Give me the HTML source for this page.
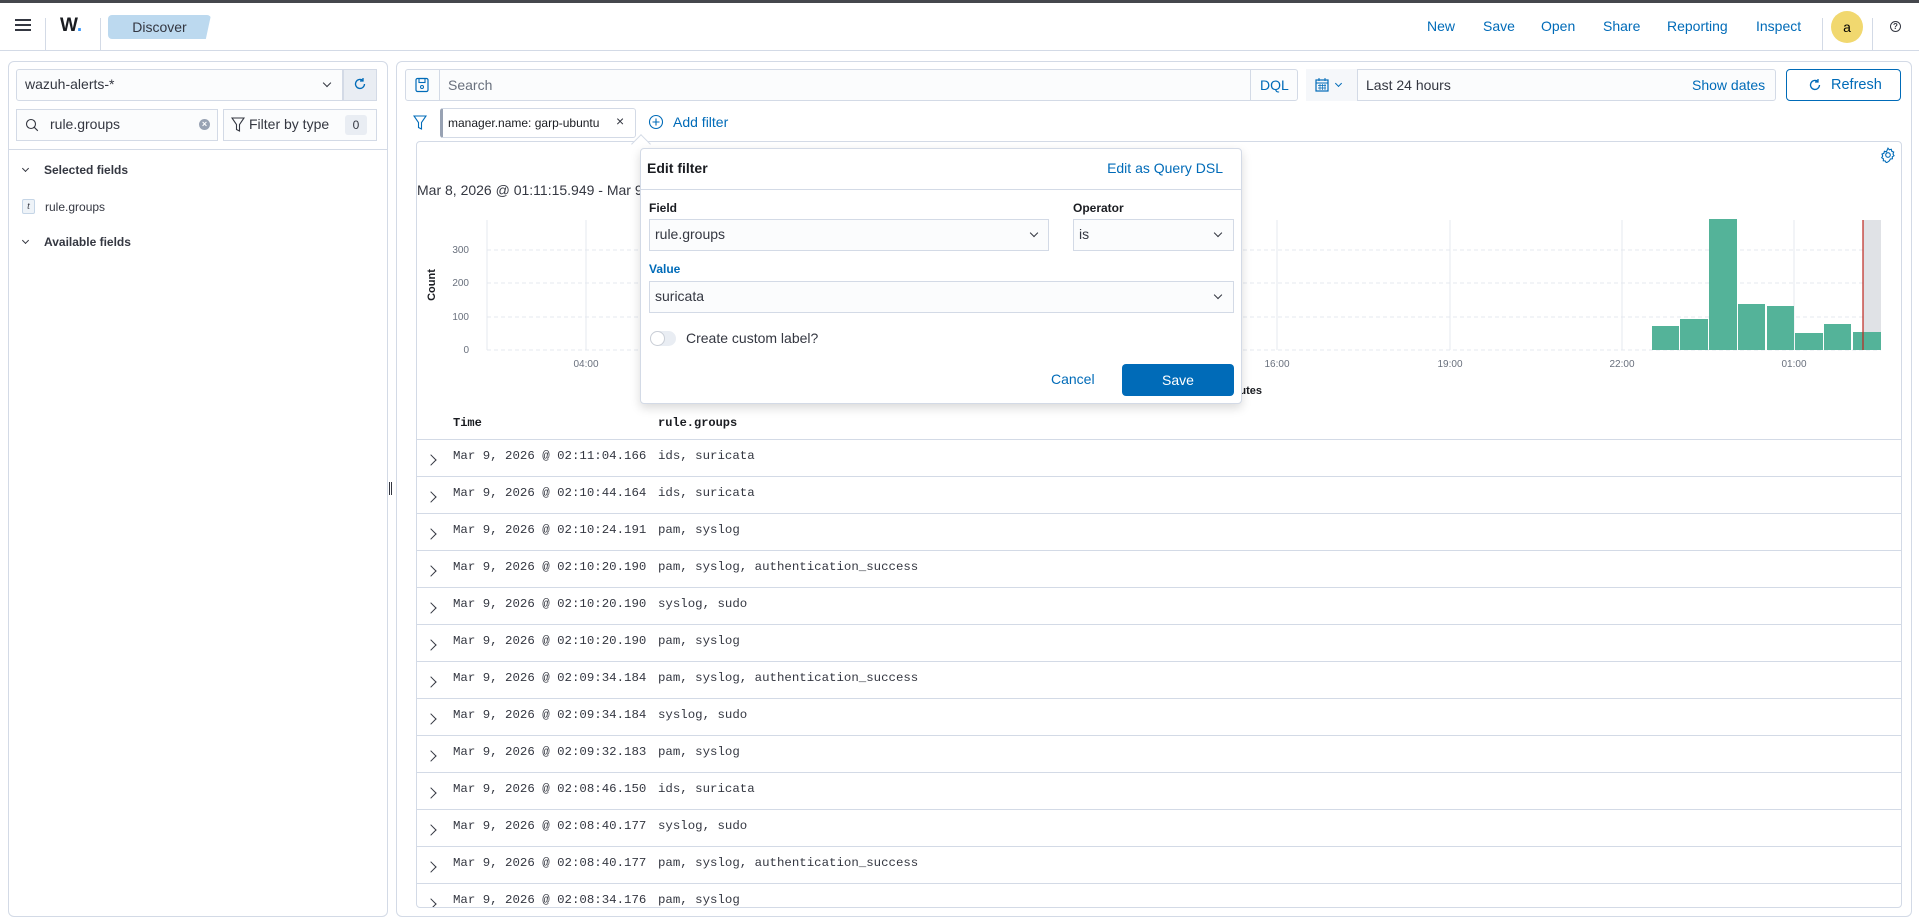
<!DOCTYPE html>
<html><head><meta charset="utf-8">
<style>
*{box-sizing:border-box;margin:0;padding:0}
body{width:1919px;height:920px;overflow:hidden;background:#fff;font-family:"Liberation Sans",sans-serif;color:#343741;font-size:14px;position:relative}
.a{position:absolute}
.blue{color:#006bb8}
.box{position:absolute;border:1px solid #d3dae6;background:#fbfcfd}
.mono{font-family:"Liberation Mono",monospace}
.lbl{font-size:12px;font-weight:bold;color:#1a1c21}
.chev{position:absolute;width:7px;height:7px;border-right:1.3px solid #343741;border-bottom:1.3px solid #343741;transform:rotate(45deg)}
.rowchev{position:absolute;width:8px;height:8px;border-right:1.3px solid #343741;border-top:1.3px solid #343741;transform:rotate(45deg)}
</style></head><body>
<div class="a" style="left:0;top:0;width:1919px;height:3px;background:#45474d"></div>
<div class="a" style="left:0;top:3px;width:1919px;height:48px;border-bottom:1px solid #d3dae6;background:#fff"></div>
<div class="a" style="left:15px;top:19px;width:16px;height:2px;background:#343741;box-shadow:0 5px 0 #343741,0 10px 0 #343741"></div>
<div class="a" style="left:45px;top:18px;width:1px;height:33px;background:#d3dae6"></div>
<div class="a" style="left:60px;top:15px;font-size:19px;font-weight:bold;color:#1a1c21">W<span style="color:#3595f9">.</span></div>
<div class="a" style="left:100px;top:18px;width:1px;height:33px;background:#d3dae6"></div>
<div class="a" style="left:108px;top:15px;width:103px;height:24px;background:#bcd9ef;border-radius:4px;clip-path:polygon(0 0,100% 0,95% 100%,0 100%);text-align:center;line-height:24px;font-size:14px;color:#343741">Discover</div>
<div class="a blue" style="left:1427px;top:18px">New</div>
<div class="a blue" style="left:1483px;top:18px">Save</div>
<div class="a blue" style="left:1541px;top:18px">Open</div>
<div class="a blue" style="left:1603px;top:18px">Share</div>
<div class="a blue" style="left:1667px;top:18px">Reporting</div>
<div class="a blue" style="left:1756px;top:18px">Inspect</div>
<div class="a" style="left:1822px;top:18px;width:1px;height:33px;background:#d3dae6"></div>
<div class="a" style="left:1831px;top:11px;width:32px;height:32px;border-radius:50%;background:#f1d86f;text-align:center;line-height:32px;font-size:14px;color:#000">a</div>
<div class="a" style="left:1872px;top:18px;width:1px;height:33px;background:#d3dae6"></div>
<div class="a" style="left:1890px;top:21px;width:11px;height:11px;border:1.2px solid #343741;border-radius:50%;font-size:8px;line-height:9px;text-align:center;font-weight:bold">?</div>

<div class="a" style="left:8px;top:61px;width:380px;height:856px;border:1px solid #d3dae6;border-radius:6px;background:#fff"></div>
<div class="box" style="left:16px;top:69px;width:327px;height:32px;border-radius:3px 0 0 3px"></div>
<div class="a" style="left:25px;top:76px;font-size:14px">wazuh-alerts-*</div>
<div class="chev" style="left:324px;top:80px;width:6px;height:6px"></div>
<div class="a" style="left:343px;top:69px;width:34px;height:32px;background:#e9edf3;border:1px solid #d3dae6"></div>
<svg class="a" style="left:353px;top:77px" width="14" height="14" viewBox="0 0 14 14"><path d="M11.5 7a4.5 4.5 0 1 1-1.6-3.5" fill="none" stroke="#006bb8" stroke-width="1.3"/><path d="M10 1v3h-3" fill="none" stroke="#006bb8" stroke-width="1.3"/></svg>
<div class="box" style="left:16px;top:109px;width:202px;height:32px"></div>
<svg class="a" style="left:25px;top:118px" width="14" height="14"><circle cx="6" cy="6" r="4.5" fill="none" stroke="#343741" stroke-width="1.1"/><path d="M9.3 9.3l3.5 3.5" stroke="#343741" stroke-width="1.1"/></svg>
<div class="a" style="left:50px;top:116px">rule.groups</div>
<div class="a" style="left:199px;top:119px;width:11px;height:11px;border-radius:50%;background:#98a2b3;color:#fff;font-size:9px;line-height:11px;text-align:center;font-weight:bold">×</div>
<div class="box" style="left:223px;top:109px;width:154px;height:32px"></div>
<svg class="a" style="left:231px;top:117px" width="14" height="16"><path d="M1 1h12L8.5 7.5V14l-3-1.5V7.5z" fill="none" stroke="#343741" stroke-width="1.1"/></svg>
<div class="a" style="left:249px;top:116px">Filter by type</div>
<div class="a" style="left:345px;top:115px;width:22px;height:20px;background:#e9edf3;border-radius:3px;text-align:center;line-height:20px;font-size:12px">0</div>
<div class="a" style="left:9px;top:149px;width:378px;height:1px;background:#d3dae6"></div>
<div class="chev" style="left:23px;top:166px;width:5px;height:5px;border-width:1px"></div>
<div class="a lbl" style="left:44px;top:163px;color:#343741">Selected fields</div>
<div class="a" style="left:22px;top:199px;width:13px;height:15px;border:1px solid #c5d5e6;background:#eef3f8;border-radius:2px;font-size:10px;text-align:center;line-height:13px;font-style:italic;font-family:'Liberation Serif',serif">t</div>
<div class="a" style="left:45px;top:200px;font-size:12px">rule.groups</div>
<div class="chev" style="left:23px;top:238px;width:5px;height:5px;border-width:1px"></div>
<div class="a lbl" style="left:44px;top:235px;color:#343741">Available fields</div>
<div class="a" style="left:389px;top:482px;width:1px;height:13px;background:#343741;box-shadow:2px 0 0 #343741"></div>

<div class="a" style="left:396px;top:61px;width:1516px;height:856px;border:1px solid #d3dae6;border-radius:6px;background:#fff"></div>
<div class="box" style="left:405px;top:69px;width:893px;height:32px;border-radius:3px"></div>
<div class="a" style="left:405px;top:69px;width:35px;height:32px;border-right:1px solid #d3dae6"></div>
<svg class="a" style="left:414px;top:77px" width="16" height="16"><rect x="2" y="1.5" width="12" height="13" rx="1.5" fill="none" stroke="#006bb8" stroke-width="1.2"/><rect x="5" y="1.5" width="6" height="4" fill="none" stroke="#006bb8" stroke-width="1.1"/><circle cx="8" cy="10" r="1.5" fill="none" stroke="#006bb8"/></svg>
<div class="a" style="left:448px;top:77px;color:#69707d">Search</div>
<div class="a" style="left:1250px;top:69px;width:1px;height:32px;background:#d3dae6"></div>
<div class="a blue" style="left:1260px;top:77px">DQL</div>
<div class="box" style="left:1306px;top:69px;width:470px;height:32px;border-radius:3px"></div>
<div class="a" style="left:1306px;top:69px;width:52px;height:32px;border-right:1px solid #d3dae6;background:#f5f7fa"></div>
<svg class="a" style="left:1315px;top:78px" width="14" height="14"><rect x="1" y="2" width="12" height="11" fill="none" stroke="#006bb8" stroke-width="1.2"/><path d="M1 5h12M4 0v3M10 0v3" stroke="#006bb8"/><path d="M3 7.5h8M3 10h8M5 6v6M7.5 6v6M10 6v6" stroke="#006bb8" stroke-width=".7"/></svg>
<div class="chev" style="left:1336px;top:81px;width:5px;height:5px;border-color:#006bb8;border-width:1px"></div>
<div class="a" style="left:1366px;top:77px">Last 24 hours</div>
<div class="a blue" style="left:1692px;top:77px">Show dates</div>
<div class="a" style="left:1786px;top:69px;width:115px;height:32px;border:1px solid #006bb8;border-radius:4px"></div>
<svg class="a" style="left:1808px;top:78px" width="14" height="14"><path d="M11.5 7a4.5 4.5 0 1 1-1.6-3.5" fill="none" stroke="#006bb8" stroke-width="1.3"/><path d="M10 1v3h-3" fill="none" stroke="#006bb8" stroke-width="1.3"/></svg>
<div class="a blue" style="left:1831px;top:77px;font-size:14.5px">Refresh</div>

<svg class="a" style="left:413px;top:115px" width="14" height="16"><path d="M1 1h12L8.5 7.5V14l-3-1.5V7.5z" fill="none" stroke="#006bb8" stroke-width="1.1"/></svg>
<div class="a" style="left:440px;top:108px;width:196px;height:30px;border:1px solid #d3dae6;border-left:3px solid #98a2b3;border-radius:3px;background:#fff"></div>
<div class="a" style="left:448px;top:116px;font-size:12px;color:#1a1c21">manager.name: garp-ubuntu</div>
<div class="a" style="left:616px;top:113px;font-size:14px;color:#343741">×</div>
<svg class="a" style="left:648px;top:114px" width="16" height="16"><circle cx="8" cy="8" r="6.5" fill="none" stroke="#006bb8" stroke-width="1.1"/><path d="M8 4.5v7M4.5 8h7" stroke="#006bb8" stroke-width="1.1"/></svg>
<div class="a blue" style="left:673px;top:114px">Add filter</div>

<div class="a" style="left:416px;top:141px;width:1486px;height:767px;border:1px solid #d3dae6;border-radius:4px;background:#fff;overflow:hidden">
  <div class="a" style="left:0;top:40px;font-size:14px">Mar 8, 2026 @ 01:11:15.949 - Mar 9, 2026 @ 02:11:15.949</div>
</div>
<svg class="a" style="left:1880px;top:147px" width="16" height="16" viewBox="0 0 16 16"><circle cx="8" cy="8" r="2.3" fill="none" stroke="#006bb8" stroke-width="1.1"/><path d="M8 1.2l1.3 1.6 2-.5.5 2 1.9.8-.7 1.9 1 1.7-1.7 1.1.1 2-2 .2-1 1.8L8 14.8l-1.7 1-1-1.8-2-.2.1-2L1.7 10.7l1-1.7-.7-1.9 1.9-.8.5-2 2 .5z" fill="none" stroke="#006bb8" stroke-width="1.1"/></svg>
<svg class="a" style="left:417px;top:210px" width="1484" height="200" font-family="Liberation Sans" font-size="10" fill="#69707d">
  <g stroke="#e4e8ef" stroke-width="1">
    <line x1="169" y1="10" x2="169" y2="140"/><line x1="342" y1="10" x2="342" y2="140"/><line x1="515" y1="10" x2="515" y2="140"/><line x1="687" y1="10" x2="687" y2="140"/><line x1="860" y1="10" x2="860" y2="140"/><line x1="1033" y1="10" x2="1033" y2="140"/><line x1="1205" y1="10" x2="1205" y2="140"/><line x1="1377" y1="10" x2="1377" y2="140"/>
  </g>
  <g stroke="#e4e8ef" stroke-dasharray="4 3">
    <line x1="70" y1="40" x2="1464" y2="40"/><line x1="70" y1="73" x2="1464" y2="73"/><line x1="70" y1="107" x2="1464" y2="107"/><line x1="70" y1="140" x2="1464" y2="140"/>
  </g>
  <line x1="70" y1="10" x2="70" y2="140" stroke="#e4e8ef"/>
  <text x="52" y="43" text-anchor="end">300</text><text x="52" y="76" text-anchor="end">200</text><text x="52" y="110" text-anchor="end">100</text><text x="52" y="143" text-anchor="end">0</text>
  <text x="18" y="75" transform="rotate(-90 18 75)" text-anchor="middle" font-size="11" font-weight="bold" fill="#1a1c21">Count</text>
  <text x="169" y="157" text-anchor="middle">04:00</text><text x="342" y="157" text-anchor="middle">07:00</text><text x="515" y="157" text-anchor="middle">10:00</text><text x="687" y="157" text-anchor="middle">13:00</text><text x="860" y="157" text-anchor="middle">16:00</text><text x="1033" y="157" text-anchor="middle">19:00</text><text x="1205" y="157" text-anchor="middle">22:00</text><text x="1377" y="157" text-anchor="middle">01:00</text>
  <text x="845" y="184" text-anchor="end" font-size="11" font-weight="bold" fill="#1a1c21">@timestamp per 30 minutes</text>
  <rect x="1446" y="10" width="18" height="130" fill="#e0e2e6"/>
  <g fill="#54b399">
    <rect x="1235" y="116" width="27" height="24"/><rect x="1263" y="109" width="28" height="31"/><rect x="1292" y="9" width="28" height="131"/><rect x="1321" y="94" width="27" height="46"/><rect x="1350" y="96" width="27" height="44"/><rect x="1378" y="123" width="28" height="17"/><rect x="1407" y="114" width="27" height="26"/><rect x="1436" y="122" width="28" height="18"/>
  </g>
  <line x1="1446" y1="10" x2="1446" y2="140" stroke="#bd271e" stroke-width="1.2"/>
</svg>

<div class="a mono" style="left:453px;top:416px;font-size:12px;font-weight:bold;color:#1a1c21">Time</div>
<div class="a mono" style="left:658px;top:416px;font-size:12px;font-weight:bold;color:#1a1c21">rule.groups</div>
<div class="a" id="rows" style="left:417px;top:439px;width:1484px;height:468px;overflow:hidden">
</div>
<script>
var d=[["02:11:04.166","ids, suricata"],["02:10:44.164","ids, suricata"],["02:10:24.191","pam, syslog"],["02:10:20.190","pam, syslog, authentication_success"],["02:10:20.190","syslog, sudo"],["02:10:20.190","pam, syslog"],["02:09:34.184","pam, syslog, authentication_success"],["02:09:34.184","syslog, sudo"],["02:09:32.183","pam, syslog"],["02:08:46.150","ids, suricata"],["02:08:40.177","syslog, sudo"],["02:08:40.177","pam, syslog, authentication_success"],["02:08:34.176","pam, syslog"]];
var h="";d.forEach(function(r,i){var t=i*37;h+='<div class="a" style="left:0;top:'+t+'px;width:1484px;height:1px;background:#d3dae6"></div><div class="rowchev" style="left:10px;top:'+(t+17)+'px"></div><div class="a mono" style="left:36px;top:'+(t+10)+'px;font-size:12.4px;white-space:pre">Mar 9, 2026 @ '+r[0]+'</div><div class="a mono" style="left:241px;top:'+(t+10)+'px;font-size:12.4px;white-space:pre">'+r[1]+'</div>';});
document.getElementById("rows").innerHTML=h;
</script>

<div class="a" style="left:634px;top:137px;width:14px;height:14px;background:#fff;border-left:1px solid #d3dae6;border-top:1px solid #d3dae6;transform:rotate(45deg)"></div>
<div class="a" style="left:640px;top:148px;width:602px;height:256px;background:#fff;border:1px solid #d3dae6;border-radius:4px;box-shadow:0 4px 10px rgba(0,0,0,.15)">
  <div class="a" style="left:6px;top:11px;font-size:14px;font-weight:bold;color:#1a1c21">Edit filter</div>
  <div class="a blue" style="right:18px;top:11px;font-size:14px">Edit as Query DSL</div>
  <div class="a" style="left:0;top:40px;width:600px;height:1px;background:#d3dae6"></div>
  <div class="a lbl" style="left:8px;top:52px">Field</div>
  <div class="box" style="left:8px;top:70px;width:400px;height:32px"></div>
  <div class="a" style="left:14px;top:77px">rule.groups</div>
  <div class="chev" style="left:390px;top:81px;width:6px;height:6px;border-width:1px"></div>
  <div class="a lbl" style="left:432px;top:52px">Operator</div>
  <div class="box" style="left:432px;top:70px;width:161px;height:32px"></div>
  <div class="a" style="left:438px;top:77px">is</div>
  <div class="chev" style="left:574px;top:81px;width:6px;height:6px;border-width:1px"></div>
  <div class="a lbl" style="left:8px;top:113px;color:#006bb8">Value</div>
  <div class="box" style="left:8px;top:132px;width:585px;height:32px"></div>
  <div class="a" style="left:14px;top:139px">suricata</div>
  <div class="chev" style="left:574px;top:143px;width:6px;height:6px;border-width:1px"></div>
  <div class="a" style="left:9px;top:182px;width:26px;height:15px;border-radius:8px;background:#e9edf3"></div>
  <div class="a" style="left:9px;top:182px;width:15px;height:15px;border-radius:50%;background:#fff;border:1px solid #c9ced6"></div>
  <div class="a" style="left:45px;top:181px">Create custom label?</div>
  <div class="a blue" style="left:410px;top:222px">Cancel</div>
  <div class="a" style="left:481px;top:215px;width:112px;height:32px;background:#006bb8;border-radius:4px;color:#fff;text-align:center;line-height:32px">Save</div>
</div>
</body></html>
